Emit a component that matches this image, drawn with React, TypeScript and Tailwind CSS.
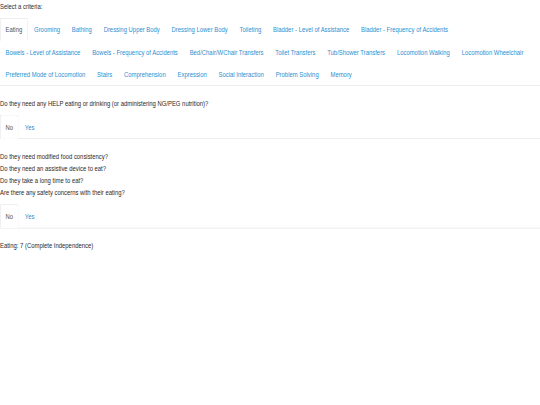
import { useState } from "react"

const criteria = [
  "Eating",
  "Grooming",
  "Bathing",
  "Dressing Upper Body",
  "Dressing Lower Body",
  "Toileting",
  "Bladder - Level of Assistance",
  "Bladder - Frequency of Accidents",
  "Bowels - Level of Assistance",
  "Bowels - Frequency of Accidents",
  "Bed/Chair/WChair Transfers",
  "Toilet Transfers",
  "Tub/Shower Transfers",
  "Locomotion Walking",
  "Locomotion Wheelchair",
  "Preferred Mode of Locomotion",
  "Stairs",
  "Comprehension",
  "Expression",
  "Social Interaction",
  "Problem Solving",
  "Memory",
]

function Tab({ label, active, onClick, tall }: { label: string; active: boolean; onClick: () => void; tall?: boolean }) {
  return (
    <li className="-mb-px mr-[2px]">
      <button
        type="button"
        onClick={onClick}
        className={
          "block px-[12px] leading-[20px] border rounded-t-[4px] " +
          (tall ? "py-[10.5px] " : "py-[9.25px] ") +
          (active ? "border-[#dddddd] border-b-white bg-white text-[#555555]" : "border-transparent text-[#2a8fd0]")
        }
      >
        {label}
      </button>
    </li>
  )
}

function YesNo({ value, onChange }: { value: string; onChange: (v: string) => void }) {
  return (
    <ul className="flex flex-wrap border-b border-[#dddddd]">
      {["No", "Yes"].map((v) => (
        <Tab key={v} label={v} active={value === v} onClick={() => onChange(v)} tall />
      ))}
    </ul>
  )
}

export default function App() {
  const [criterion, setCriterion] = useState("Eating")
  const [help, setHelp] = useState("No")
  const [extra, setExtra] = useState("No")

  return (
    <div className="w-[540px] h-[405px] overflow-hidden bg-white">
      <div className="w-[1280px] h-[720px] origin-top-left scale-x-[0.421875] scale-y-[0.5625] font-['Liberation_Sans',Arial,sans-serif] text-[14px] text-[#2a2a2a]">
        <p className="leading-[22px] mb-[10px]">Select a criteria:</p>

        <ul className="flex flex-wrap border-b border-[#dddddd] pr-[18px]">
          {criteria.map((c) => (
            <Tab key={c} label={c} active={criterion === c} onClick={() => setCriterion(c)} />
          ))}
        </ul>

        <div className="pt-[22.5px]">
          <p className="leading-[20px] mb-[10px]">Do they need any HELP eating or drinking (or administering NG/PEG nutrition)?</p>
          <YesNo value={help} onChange={setHelp} />

          <div className="pt-[20px] leading-[21.5px] mb-[10px]">
            <div>Do they need modified food consistency?</div>
            <div>Do they need an assistive device to eat?</div>
            <div>Do they take a long time to eat?</div>
            <div>Are there any safety concerns with their eating?</div>
          </div>
          <YesNo value={extra} onChange={setExtra} />

          <p className="pt-[20px] leading-[20px]">Eating: 7 (Complete Independence)</p>
        </div>
      </div>
    </div>
  )
}
